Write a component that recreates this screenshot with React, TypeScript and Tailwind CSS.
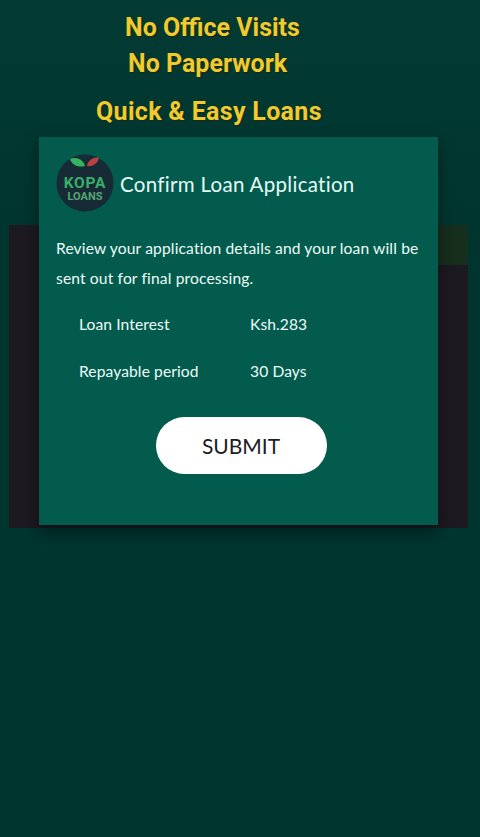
import React from "react"

function Logo() {
  return (
    <svg width="58" height="58" viewBox="0 0 58 58" className="shrink-0">
      <circle cx="29" cy="29" r="28.5" fill="#172b37" />
      <path d="M14 5 C20 2.5 27 5 29 12 C22 14 16 11 14 5 Z" fill="#35b35f" />
      <path d="M31 12 C32 6 37 3 43 3.5 C42 9 37 13 31 12 Z" fill="#b8423f" />
      <text x="29" y="33.5" textAnchor="middle" fontFamily="Roboto, sans-serif" fontWeight="700" fontSize="15.5" letterSpacing="0.8" fill="#38b06a">KOPA</text>
      <text x="29" y="46" textAnchor="middle" fontFamily="Roboto, sans-serif" fontWeight="700" fontSize="11" fill="#55a670">LOANS</text>
    </svg>
  )
}

export default function App() {
  return (
    <div className="relative h-[837px] w-[480px] overflow-hidden bg-[#00352f] font-['Lato',sans-serif]">
      <div className="h-[225px] bg-gradient-to-b from-[#033a33] to-[#00352f] font-['Roboto',sans-serif] text-[25px] font-bold text-[#f0ca2e] [text-shadow:1px_1px_1px_#1b2a10]">
        <p className="pl-[125px] pt-[12px] leading-[32px]">No Office Visits</p>
        <p className="pl-[128px] pt-[4px] leading-[32px]">No Paperwork</p>
        <p className="pl-[96px] pt-[16px] leading-[32px] tracking-[0.32px]">Quick &amp; Easy Loans</p>
      </div>

      <div className="ml-[9px] h-[303px] w-[459px] bg-[#1c1920]">
        <div className="h-[40px] bg-gradient-to-r from-[#1c1920] via-[#1c1920] to-[#15301c]" />
      </div>

      <div className="absolute left-[39px] top-[137px] h-[388px] w-[399px] bg-[#025b4d] px-[17px] pt-[17px] shadow-[0_8px_16px_rgba(0,0,0,0.4)]">
        <div className="flex items-center gap-[6px]">
          <Logo />
          <h2 className="pt-[2px] text-[20.5px] leading-[28px] tracking-[0.3px] text-[#e6faf6]">Confirm Loan Application</h2>
        </div>
        <p className="mt-[22px] text-[15.6px] leading-[29.5px] tracking-[0.14px] text-[#eefbf8]">
          Review your application details and your loan will be sent out for final processing.
        </p>
        <div className="ml-[23px] mt-[20px] grid grid-cols-[171px_1fr] gap-y-[25px] text-[15.6px] leading-[22px] tracking-[0.1px] text-[#eefbf8]">
          <span>Loan Interest</span>
          <span>Ksh.283</span>
          <span>Repayable period</span>
          <span>30 Days</span>
        </div>
        <div className="ml-[5px] mt-[35px] flex justify-center">
          <button className="h-[57px] w-[171px] rounded-full bg-white text-[21px] text-[#1c1c22]">
            SUBMIT
          </button>
        </div>
      </div>
    </div>
  )
}
